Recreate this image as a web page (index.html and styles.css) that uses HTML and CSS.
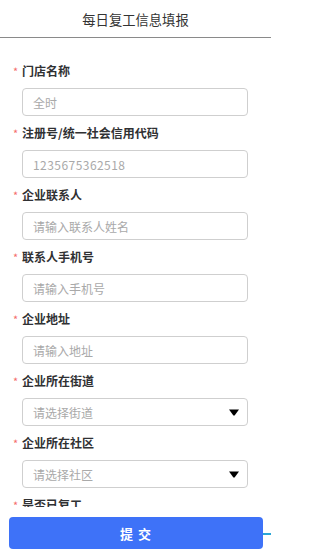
FILE: index.html
```html
<!DOCTYPE html>
<html lang="zh-CN">
<head>
<meta charset="utf-8">
<title>每日复工信息填报</title>
<link rel="stylesheet" href="styles.css">
</head>
<body>
<div class="app">
  <header class="topbar">每日复工信息填报</header>
  <main class="form">
    <div class="item">
      <div class="label">门店名称</div>
      <input class="field" type="text" placeholder="全时">
    </div>
    <div class="item">
      <div class="label">注册号/统一社会信用代码</div>
      <input class="field num" type="text" placeholder="1235675362518">
    </div>
    <div class="item">
      <div class="label">企业联系人</div>
      <input class="field" type="text" placeholder="请输入联系人姓名">
    </div>
    <div class="item">
      <div class="label">联系人手机号</div>
      <input class="field" type="text" placeholder="请输入手机号">
    </div>
    <div class="item">
      <div class="label">企业地址</div>
      <input class="field" type="text" placeholder="请输入地址">
    </div>
    <div class="item">
      <div class="label">企业所在街道</div>
      <div class="field select">
        <span class="ph">请选择街道</span>
        <svg class="caret" width="10" height="7" viewBox="0 0 10 7"><path d="M0 0.5 H10 L5.6 6.5 H4.4 Z" fill="#000"/></svg>
      </div>
    </div>
    <div class="item">
      <div class="label">企业所在社区</div>
      <div class="field select">
        <span class="ph">请选择社区</span>
        <svg class="caret" width="10" height="7" viewBox="0 0 10 7"><path d="M0 0.5 H10 L5.6 6.5 H4.4 Z" fill="#000"/></svg>
      </div>
    </div>
    <div class="item">
      <div class="label">是否已复工</div>
    </div>
  </main>
  <footer class="footer">
    <button class="submit" type="button">提 交</button>
    <span class="edge"></span>
  </footer>
</div>
</body>
</html>
```
FILE: styles.css
```css
html, body {
  margin: 0;
  padding: 0;
  background: #fff;
}
body {
  font-family: "Noto Sans CJK SC", "Noto Sans", sans-serif;
  color: #333;
}
.app {
  width: 271px;
  height: 557px;
  display: flex;
  flex-direction: column;
  overflow: hidden;
}
.topbar {
  flex: 0 0 38px;
  height: 38px;
  box-sizing: border-box;
  display: flex;
  align-items: center;
  justify-content: center;
  padding-top: 2px;
  font-size: 13.3px;
  color: #333;
  border-bottom: 1px solid #8a8a8a;
}
.form {
  flex: 1;
  overflow: hidden;
  padding: 23px 23px 0 22px;
}
.item {
  padding-bottom: 7px;
}
.label {
  height: 20px;
  line-height: 20px;
  font-size: 12px;
  font-weight: bold;
  color: #303133;
  margin-bottom: 7px;
}
.label::before {
  content: "*";
  display: inline-block;
  width: 9px;
  margin-left: -9px;
  color: #f56c6c;
  font-size: 11px;
  font-weight: normal;
}
.field {
  display: flex;
  align-items: center;
  box-sizing: border-box;
  width: 226px;
  height: 28px;
  margin: 0;
  padding: 0 10px;
  border: 1px solid #cfcfcf;
  border-radius: 4px;
  font-family: inherit;
  font-size: 12px;
  color: #333;
  background: #fff;
  outline: none;
}
.field::placeholder {
  color: #a9a9a9;
}
.num {
  letter-spacing: 0.45px;
}
.select {
  justify-content: space-between;
  padding-right: 8px;
}
.ph {
  color: #a9a9a9;
}
.caret {
  display: block;
}
.footer {
  position: relative;
  flex: 0 0 50px;
  background: #fff;
  padding: 10px 8px 0 9px;
  box-sizing: border-box;
}
.submit {
  display: block;
  width: 100%;
  height: 32px;
  border: none;
  border-radius: 4px;
  background: #3e72f8;
  color: #fff;
  font-family: inherit;
  font-size: 13px;
  font-weight: bold;
  letter-spacing: 1px;
  padding: 0;
}
.edge {
  position: absolute;
  right: 0;
  top: 26px;
  width: 8px;
  height: 2px;
  background: #2aa6d6;
}
```
